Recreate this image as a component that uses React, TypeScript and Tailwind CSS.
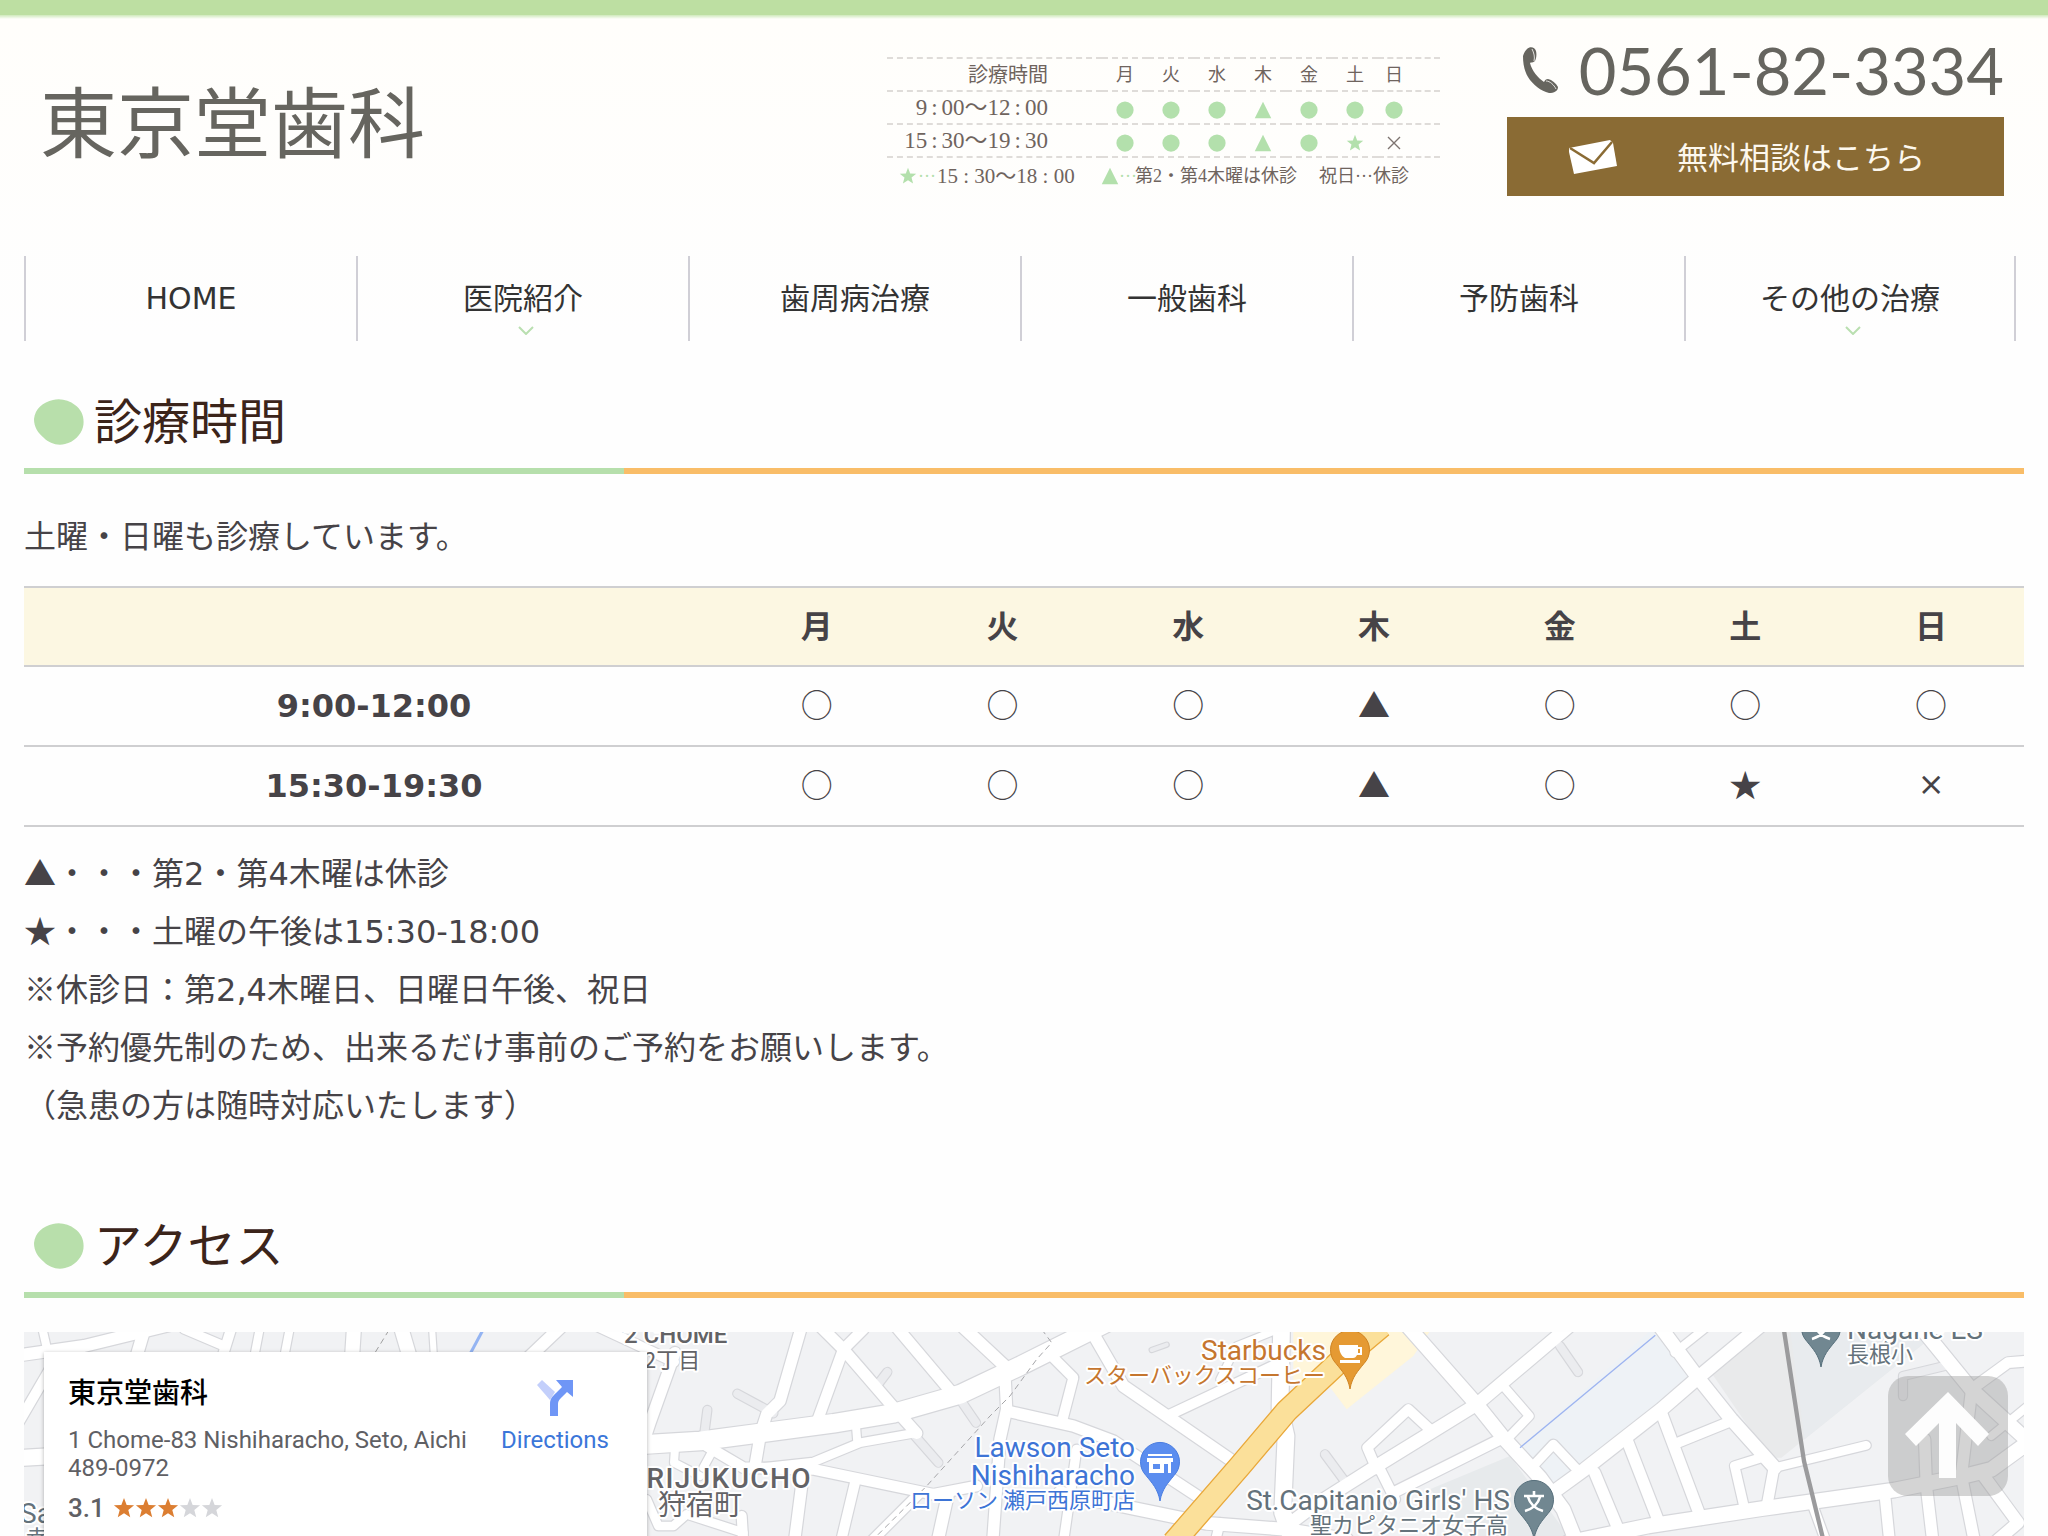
import React from "react";

const DAYS = ["月", "火", "水", "木", "金", "土", "日"];

const NAV = [
  { label: "HOME", more: false },
  { label: "医院紹介", more: true },
  { label: "歯周病治療", more: false },
  { label: "一般歯科", more: false },
  { label: "予防歯科", more: false },
  { label: "その他の治療", more: true },
];

const HOURS = [
  { time: "9:00-12:00", marks: ["○", "○", "○", "▲", "○", "○", "○"] },
  { time: "15:30-19:30", marks: ["○", "○", "○", "▲", "○", "★", "×"] },
];

const MINI = [
  { time: "9：00〜12：00", marks: ["c", "c", "c", "t", "c", "c", "c"] },
  { time: "15：30〜19：30", marks: ["c", "c", "c", "t", "c", "s", "x"] },
];

const CJK = "font-['Noto_Sans_CJK_JP',sans-serif]";
const SYMBOL = "font-['Noto_Sans_CJK_JP',sans-serif] leading-none";
const SERIF = "font-['Liberation_Serif','Noto_Sans_CJK_JP',serif]";

const STAR = "M12 1l2.9 7.6 8.1.4-6.3 5.1 2.1 7.9-6.8-4.4-6.8 4.4 2.1-7.9L1 9l8.1-.4z";

function Mark({ kind }: { kind: string }) {
  return (
    <svg viewBox="0 0 24 24" className="inline-block size-[18px] align-middle" aria-hidden="true">
      {kind === "c" && <circle cx="12" cy="12" r="11.5" fill="#b3e0ac" />}
      {kind === "t" && <path d="M12 1L23 23H1z" fill="#b3e0ac" />}
      {kind === "s" && <path d={STAR} fill="#b3e0ac" />}
      {kind === "x" && <path d="M4 4l16 16M20 4L4 20" stroke="#7d7470" strokeWidth="1.8" />}
    </svg>
  );
}

function MiniSchedule() {
  return (
    <div className={`w-[553px] text-[#6f645e] ${SERIF}`}>
      <table className="w-full table-fixed border-collapse">
        <colgroup>
          <col className="w-[215px]" />
          {DAYS.slice(1).map((d) => (
            <col key={d} className="w-[46px]" />
          ))}
          <col className="w-[62px]" />
        </colgroup>
        <tbody>
          <tr className="h-[33px] border-y-2 border-dashed border-[#dfdcd9] text-[20px] leading-6">
            <th scope="col" className="p-0 pr-[54px] text-right font-normal">診療時間</th>
            {DAYS.map((d) => (
              <th key={d} scope="col" className="p-0 text-center text-[18px] font-normal last:pr-[30px]">{d}</th>
            ))}
          </tr>
          {MINI.map((r) => (
            <tr key={r.time} className="h-[33px] border-y-2 border-dashed border-[#dfdcd9] text-[23px] leading-6">
              <th scope="row" className="p-0 pr-[54px] text-right font-normal whitespace-nowrap">
                {r.time.split("：").map((part, i) => (
                  <React.Fragment key={i}>
                    {i > 0 && <span className="px-1">:</span>}
                    {part}
                  </React.Fragment>
                ))}
              </th>
              {r.marks.map((m, i) => (
                <td key={i} className="p-0 text-center leading-none last:pr-[30px]"><Mark kind={m} /></td>
              ))}
            </tr>
          ))}
        </tbody>
      </table>
      <p className="flex items-center pt-1 pl-3 text-[18px] leading-7 whitespace-nowrap">
        <Mark kind="s" />
        <span className="w-5 text-center text-[#b3e0ac]">···</span>
        <span className="w-[164px] text-[21px]">15 : 30〜18 : 00</span>
        <Mark kind="t" />
        <span className="w-4 text-center text-[#b3e0ac]">···</span>
        <span className="w-[184px]">第2・第4木曜は休診</span>
        <span>祝日···休診</span>
      </p>
    </div>
  );
}

function SectionTitle({ children }: { children: React.ReactNode }) {
  return (
    <div>
      <h2 className="flex items-center pb-2.5 pl-2.5 text-[48px] leading-[72px] text-[#3b241a]">
        <svg viewBox="0 0 50 46" className="mr-2.5 h-[46px] w-[50px]" aria-hidden="true">
          <path d="M19 1C26-1 35 1 41 6c7 5 10 13 8 22-2 8-9 15-18 17-8 2-16-1-21-6C4 34 0 28 0 20 1 10 9 3 19 1z" fill="#b8dfab" />
        </svg>
        {children}
      </h2>
      <div className="flex h-1.5">
        <div className="w-[30%] bg-[#b6dfac]" />
        <div className="flex-1 bg-[#f9bd68]" />
      </div>
    </div>
  );
}

type Road = [string, number];

const ROADS_WEST: Road[] = [
  ["M-10 24L60 14L150 -8", 12], ["M18 -5L26 30", 8], ["M112 26L122 -8", 12], ["M160 -3L200 14", 9], ["M208 -6L198 26", 10],
  ["M236 -5L230 26", 8], ["M266 -5L260 26", 8], ["M330 -5L328 26", 14], ["M376 -8L386 26", 14], ["M408 -5L410 26", 6],
  ["M500 30L540 -8", 12], ["M-5 126L30 124", 16], ["M-5 90L30 30", 10], ["M575 -5L650 30", 10],
];

const ROADS_CENTER: Road[] = [
  ["M-100 380L140 355L300 345L700 292L880 262L1080 205L1260 120L1520 -10", 56],
  ["M605 0L540 225L500 265L482 320L465 420", 34],
  ["M650 -10L730 70L890 255L950 322", 34],
  ["M790 10L730 70L650 290", 32],
  ["M870 -20L1060 205", 34],
  ["M1075 -10L1225 130", 36],
  ["M1350 85L1420 155L1385 290", 30],
  ["M1215 150L1220 250L1200 340L1178 650", 34],
  ["M1220 255L1420 300L1540 345L1800 515", 34],
  ["M440 430L640 408L780 350L950 320", 26],
  ["M772 350L768 300", 24],
  ["M320 360L430 425L640 430L1000 505L1130 480", 32],
  ["M225 365L222 410L300 450", 24],
  ["M340 370L310 425", 24],
  ["M225 80L150 290L120 380", 34],
  ["M610 440L583 650", 34],
  ["M765 470L722 650", 30],
  ["M960 500L810 650", 30],
  ["M1045 500L1012 650", 36],
  ["M140 520L175 600L220 600L260 565L430 620", 26],
  ["M425 570L430 650", 30],
];

const ROADS_EAST: Road[] = [
  ["M20 -10L130 180L450 400", 36],
  ["M265 268L600 110", 30],
  ["M420 160L470 60L620 0", 22],
  ["M605 -10L600 250L618 330L608 560L640 650", 50],
  ["M-60 500L150 545L380 592L620 610L800 640", 38],
  ["M-10 370L-50 650", 28],
  ["M420 590L405 650", 28],
  ["M965 -20L1190 235L1270 335L1380 455L1450 550L1490 650", 42],
  ["M1480 -10L1190 235L890 420L700 540L620 600", 38],
  ["M890 430L862 365L985 250L1055 315", 30],
  ["M895 420L945 520", 30],
  ["M940 500L1270 335", 32],
  ["M1270 180L1348 270L1285 335", 26],
  ["M1350 430L1420 355L1500 440", 28],
];

const ROADS_FAR_EAST: Road[] = [
  ["M320 -20L450 155L550 280L680 425", 40],
  ["M660 -20L450 155L340 250L110 430L0 510", 40],
  ["M380 80L480 0", 24],
  ["M340 260L460 580", 34],
  ["M385 352L550 285", 30],
  ["M240 350L335 595", 34],
  ["M140 440L215 620", 34],
  ["M680 425L955 358", 26],
  ["M590 550L560 420L640 395", 28],
  ["M678 425L655 550", 32],
  ["M60 650L300 600L640 548L1040 492L1250 450L1330 430L1440 350", 44],
  ["M795 540L835 650", 28],
  ["M1010 500L1025 650", 32],
  ["M1130 340L1135 480L1155 650", 34],
  ["M1270 200L1240 450L1280 650", 34],
  ["M1115 0L1270 190L1440 345", 42],
  ["M1270 190L1380 110L1440 105", 32],
  ["M1300 440L1410 590L1340 650", 36],
  ["M1440 240L1330 330", 24],
];

const LANES: Road[] = [
  ["M412 203L520 262", 24], ["M322 252L312 330", 24], ["M862 138L830 180", 24], ["M1080 220L1128 290", 24],
  ["M945 330L1015 410", 24], ["M2175 385L2245 480", 24], ["M1655 72L1700 56", 12],
  ["M2880 60L2934 138", 24], ["M3909 210L3909 150L4034 120", 24],
];

const GROUPS = [
  { t: "", k: 1, roads: ROADS_WEST },
  { t: "translate(576 -6) scale(0.33333)", k: 3, roads: ROADS_CENTER },
  { t: "translate(1056 -6) scale(0.33333)", k: 3, roads: ROADS_EAST },
  { t: "translate(1524 -6) scale(0.33333)", k: 3, roads: ROADS_FAR_EAST },
];

function Pin({ x, y, fill, edge, children }: { x: number; y: number; fill: string; edge: string; children: React.ReactNode }) {
  return (
    <g transform={`translate(${x} ${y})`}>
      <path d="M0 38C-2 26-8 20-14 12.500A19.500 19.500 0 1 1 14 12.500C8 20 2 26 0 38z" fill={fill} stroke={edge} strokeWidth="1" />
      {children}
    </g>
  );
}

const LATIN = "font-[Roboto,sans-serif] text-[28px]";
const KANA = "font-['Noto_Sans_CJK_JP',sans-serif] text-[22px]";

const LABELS = [
  { x: 600, y: 11, text: "2 CHOME", cls: "font-[Roboto,sans-serif] text-[24px] font-medium", fill: "#636366", end: false },
  { x: 620, y: 36, text: "2丁目", cls: KANA, fill: "#636366", end: false },
  { x: 788, y: 156, text: "RIJUKUCHO", cls: "font-[Roboto,sans-serif] text-[28px] font-medium tracking-wider", fill: "#636366", end: true },
  { x: 634, y: 183, text: "狩宿町", cls: "font-['Noto_Sans_CJK_JP',sans-serif] text-[28px]", fill: "#636366", end: false },
  { x: 1302, y: 28, text: "Starbucks", cls: LATIN, fill: "#c5762f", end: true },
  { x: 1301, y: 51, text: "スターバックスコーヒー", cls: KANA, fill: "#c5762f", end: true },
  { x: 1111, y: 125, text: "Lawson Seto", cls: LATIN, fill: "#3d74d6", end: true },
  { x: 1111, y: 153, text: "Nishiharacho", cls: LATIN, fill: "#3d74d6", end: true },
  { x: 1111, y: 176, text: "ローソン 瀬戸西原町店", cls: KANA, fill: "#3d74d6", end: true },
  { x: 1486, y: 178, text: "St.Capitanio Girls' HS", cls: LATIN, fill: "#64727b", end: true },
  { x: 1484, y: 201, text: "聖カピタニオ女子高", cls: KANA, fill: "#64727b", end: true },
  { x: 1823, y: 7, text: "Nagane ES", cls: LATIN, fill: "#64727b", end: false },
  { x: 1823, y: 30, text: "長根小", cls: KANA, fill: "#64727b", end: false },
  { x: -4, y: 191, text: "Sa", cls: LATIN, fill: "#64727b", end: false },
  { x: 2, y: 214, text: "幸", cls: KANA, fill: "#64727b", end: false },
];

function MapView() {
  return (
    <svg viewBox="0 0 2000 204" preserveAspectRatio="xMinYMin slice" className="block h-full w-full" role="img" aria-label="地図">
      <rect width="2000" height="204" fill="#f1f2f4" />
      <g transform="translate(1524 -6) scale(0.33333)">
        <path d="M490 140L660 0H1130V50L700 395H665z" fill="#e9eaeb" />
        <path d="M725 0H1130V50L770 340z" fill="#e8ebee" />
        <path d="M-84 365L322 0L450 155L20 480z" fill="#eef2f6" />
      </g>
      <g transform="translate(1056 -6) scale(0.33333)">
        <path d="M1050 490L1290 390L1480 650H1200z" fill="#e7eaec" />
        <path d="M640 0H1060L1000 90L800 250L740 170L640 170z" fill="#fff6da" />
      </g>
      <g fill="none" strokeLinejoin="round" strokeLinecap="round">
        <g transform="translate(576 -6) scale(0.33333)">
          {LANES.map(([d, w]) => <path key={d} d={d} stroke="#d6d7db" strokeWidth={w + 7} />)}
        </g>
        {GROUPS.map((g, i) => (
          <g key={i} transform={g.t} stroke="#d6d7db">
            {g.roads.map(([d, w]) => <path key={d} d={d} strokeWidth={w + 2.4 * g.k} />)}
          </g>
        ))}
        <g transform="translate(576 -6) scale(0.33333)">
          {LANES.map(([d, w]) => <path key={d} d={d} stroke="#ebecef" strokeWidth={w} />)}
        </g>
        {GROUPS.map((g, i) => (
          <g key={i} transform={g.t} stroke="#ffffff">
            {g.roads.map(([d, w]) => <path key={d} d={d} strokeWidth={w} />)}
          </g>
        ))}
      </g>
      <path d="M460 -4L445 24" stroke="#94b4f2" strokeWidth="3" />
      <path d="M365 -2L349 24" stroke="#a0a0a0" strokeWidth="1" strokeDasharray="6 4" />
      <g transform="translate(1056 -6) scale(0.33333)" fill="none" strokeLinejoin="round">
        <path d="M905 0L780 105L620 255L480 420L280 650" stroke="#e9a83a" strokeWidth="72" />
        <path d="M905 0L780 105L620 255L480 420L280 650" stroke="#fbe09a" strokeWidth="64" />
      </g>
      <g transform="translate(576 -6) scale(0.33333)" fill="none">
        <path d="M1325 10L1355 50L1310 100L1230 210L1170 270L980 480L820 640" stroke="#a5a5a8" strokeWidth="3" strokeDasharray="18 12" />
      </g>
      <g transform="translate(1524 -6) scale(0.33333)" fill="none">
        <path d="M-84 365L322 28" stroke="#9db4f0" strokeWidth="4" />
        <path d="M706 0L768 405L828 650" stroke="#9b9b9d" strokeWidth="13" />
      </g>
      {LABELS.map((l) => (
        <text
          key={l.text} x={l.x} y={l.y} fill={l.fill} className={l.cls} textAnchor={l.end ? "end" : "start"}
          stroke="#ffffff" strokeWidth="4" strokeLinejoin="round" paintOrder="stroke"
        >
          {l.text}
        </text>
      ))}
      <Pin x={1326} y={19} fill="#e59a33" edge="#cf8423">
        <path d="M-11-6H8V-4H12V4H7C6 6 5 7 3 7H-5C-9 5-11 0-11-6zM8-2V2H10V-2zM-10 9H10V12H-10z" fill="#fff" fillRule="evenodd" />
      </Pin>
      <Pin x={1136} y={131} fill="#5b8def" edge="#4a7de0">
        <path d="M-12-9H12V-7H-12zM-13-5H13V-1H11V10H8V1H4V10H-11V-1H-13zM-7 1V6H0V1z" fill="#fff" fillRule="evenodd" />
      </Pin>
      {[[1510, 169], [1797, -3]].map(([x, y]) => (
        <Pin key={x} x={x} y={y} fill="#718791" edge="#566f7b">
          <path d="M0-10V-5M-10-5H10M-6-4C-4 3 2 8 9 10M6-4C4 3-2 8-9 10" stroke="#fff" strokeWidth="2.600" fill="none" />
        </Pin>
      ))}
    </svg>
  );
}

function PlaceCard() {
  return (
    <div className="absolute top-5 left-5 w-[603px] bg-white pt-6 pb-6 pl-6 font-[Roboto,'Noto_Sans_CJK_JP',sans-serif] shadow-[0_1px_4px_rgba(0,0,0,0.3)]">
      <div className="flex">
        <div className="w-[433px]">
          <h3 className="text-[28px] leading-9 font-medium text-black">東京堂歯科</h3>
          <p className="pt-3.5 text-[24px] leading-7 text-[#5f6064]">
            1 Chome-83 Nishiharacho, Seto, Aichi
            <br />
            489-0972
          </p>
          <p className="flex items-center pt-2.5 text-[26px] leading-8 font-medium text-[#606064]">
            <span className="mr-2">3.1</span>
            {[0, 1, 2, 3, 4].map((i) => (
              <svg key={i} viewBox="0 0 24 24" className="size-[22px]" aria-hidden="true">
                <path d={STAR} fill={i < 3 ? "#dc7e32" : "#d5d6da"} />
              </svg>
            ))}
          </p>
        </div>
        <a href="#directions" className="flex w-[108px] flex-col items-center pt-1 text-[24px] leading-7 text-[#3b76d9]">
          <svg viewBox="0 0 36 36" className="mb-2.5 size-9" aria-hidden="true">
            <path d="M0 5L5 0L18 12L13 20z" fill="#c3cffb" />
            <path d="M13 36V24C13 18 16 16 19 13L25 7L19 0H36V17L30 12L25 17C22 20 21 21 21 25V36z" fill="#6f96f6" />
          </svg>
          Directions
        </a>
      </div>
    </div>
  );
}

export default function App() {
  return (
    <div className="min-h-screen bg-[#fefefe] font-['DejaVu_Sans','Noto_Sans_CJK_JP',sans-serif] text-[#464347]">
      <div className="h-[15px] bg-[#bddfa2]" />
      <div className="h-1 bg-linear-to-b from-[#cfe9bb] to-[#fffefb]" />
      <header className="bg-linear-to-b from-[#fffefb] to-[#fefefe] px-6">
        <div className="flex h-[237px] items-start pr-5 pl-4">
          <h1 className={`pt-14 text-[77px] leading-[88px] text-[#66655f] ${CJK}`}>東京堂歯科</h1>
          <div className="mr-[67px] ml-auto pt-[38px]">
            <MiniSchedule />
          </div>
          <div className="w-[497px] pt-4">
            <a href="tel:0561823334" className="mb-3 flex h-[70px] items-center justify-between pl-4 text-[#66655f]">
              <svg viewBox="0 0 35 46" className="h-[46px] w-[35px]" fill="currentColor" aria-hidden="true">
                <path d="M4 2C7-1 12 0 13 4C14 8 13 12 12 14C10 16 8 15 7 16C9 24 15 31 21 35C22 33 23 32 25 32C29 33 33 36 35 40C35 44 31 46 26 46C18 44 10 38 5 30C1 23 0 16 0 9C1 6 2 4 4 2z" />
                <path d="M9 2C11 6 12 10 11 14M23 34C27 34 31 38 33 42" stroke="#fffefb" strokeWidth="0.800" fill="none" />
              </svg>
              <span className="font-[Lato,sans-serif] text-[65px] leading-none">0561-82-3334</span>
            </a>
            <a href="#contact" className={`flex h-[79px] items-center bg-[#8a6b34] pl-[62px] text-[31px] text-[#fdf8ee] ${CJK}`}>
              <svg viewBox="0 0 48 34" className="mr-[60px] h-[34px] w-12" aria-hidden="true">
                <path d="M0 8L41 0L44 3L48 26L5 34L0 12z" fill="#fff" />
                <path d="M1 8L25 23L43 2" stroke="#8a6b34" strokeWidth="2.500" fill="none" />
              </svg>
              無料相談はこちら
            </a>
          </div>
        </div>
        <nav>
          <ul className="flex">
            {NAV.map((n) => (
              <li key={n.label} className="relative w-[16.6%] border-l-2 border-[#d0cfd6] last:border-r-2">
                <a href="#" className="flex h-[85px] items-center justify-center text-[30px] text-[#333]">{n.label}</a>
                {n.more && (
                  <svg viewBox="0 0 16 9" className="absolute right-0 bottom-1.5 left-1.5 mx-auto h-[9px] w-4" aria-hidden="true">
                    <path d="M1 1l7 7 7-7" stroke="#b9dfb0" strokeWidth="2" fill="none" />
                  </svg>
                )}
              </li>
            ))}
          </ul>
        </nav>
      </header>

      <main className="px-6">
        <section className="pt-[45px]">
          <SectionTitle>診療時間</SectionTitle>
          <p className="pt-[34px] pb-5 text-[32px] leading-[58px]">土曜・日曜も診療しています。</p>
          <table className="w-full table-fixed border-collapse text-center text-[32px] leading-none">
            <thead>
              <tr className="h-[79px] border-y-2 border-[#cfcfd1] bg-[#fcf7e2]">
                <td className="w-[35%]" />
                {DAYS.map((d) => (
                  <th key={d} scope="col" className="p-0 font-bold">{d}</th>
                ))}
              </tr>
            </thead>
            <tbody>
              {HOURS.map((r) => (
                <tr key={r.time} className="h-20 border-y-2 border-[#cfcfd1]">
                  <th scope="row" className="p-0 font-bold">{r.time}</th>
                  {r.marks.map((m, i) => (
                    <td key={i} className="p-0 pb-1">{m === "×" ? m : <span className={CJK}>{m}</span>}</td>
                  ))}
                </tr>
              ))}
            </tbody>
          </table>
          <div className="pt-[18px] text-[32px] leading-[58px]">
            <p><span className={SYMBOL}>▲</span>・・・第2・第4木曜は休診</p>
            <p><span className={SYMBOL}>★</span>・・・土曜の午後は15:30-18:00</p>
            <p><span className={SYMBOL}>※</span>休診日：第2,4木曜日、日曜日午後、祝日</p>
            <p><span className={SYMBOL}>※</span>予約優先制のため、出来るだけ事前のご予約をお願いします。</p>
            <p>（急患の方は随時対応いたします）</p>
          </div>
        </section>

        <section className="pt-[75px]">
          <SectionTitle>アクセス</SectionTitle>
          <div className="relative mt-[34px] h-[204px] overflow-hidden">
            <MapView />
            <PlaceCard />
          </div>
        </section>
      </main>

      <button type="button" aria-label="ページの先頭へ" className="fixed right-10 bottom-10 size-[120px] rounded-[20px] bg-[#a0a0a0]/45">
        <svg viewBox="0 0 120 120" className="size-full" aria-hidden="true">
          <path d="M60 16L101 58L90 70L68 47V102H51V47L28 70L17 58z" fill="#fdfdfd" />
        </svg>
      </button>
    </div>
  );
}
